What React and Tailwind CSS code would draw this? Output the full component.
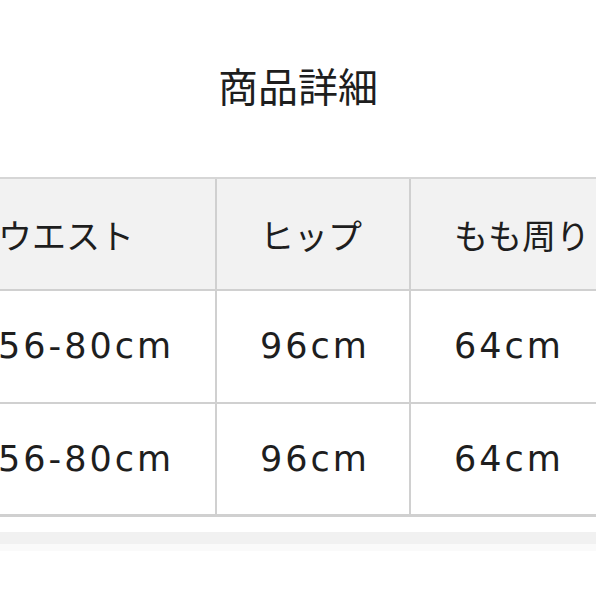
import React from 'react';

const headers = ['ウエスト', 'ヒップ', 'もも周り'];
const rows = [
  ['56-80cm', '96cm', '64cm'],
  ['56-80cm', '96cm', '64cm'],
];
const widths = ['w-[262px]', 'w-[194px]', 'w-[200px]'];

export default function App() {
  return (
    <div
      className="w-[596px] h-[596px] overflow-hidden bg-white text-[#1e1e1e]"
      style={{ fontFamily: '"Noto Sans CJK JP", "Noto Sans", sans-serif' }}
    >
      <h1 className="mt-[65px] text-center text-[40px] leading-none font-normal">商品詳細</h1>

      <div className="mt-[72px] ml-[-45px] w-[656px] border-t-2 border-[#d6d6d6]">
        <div className="flex h-[112px] border-b-2 border-[#d0d0d0] bg-[#f2f2f2]">
          {headers.map((h, i) => (
            <div
              key={h}
              className={`${widths[i]} shrink-0 flex items-center pl-[43px] text-[34px] border-r-2 border-[#d0d0d0]`}
            >
              {h}
            </div>
          ))}
        </div>
        {rows.map((row, r) => (
          <div
            key={r}
            className={`flex h-[113px] bg-white border-[#d0d0d0] ${r === rows.length - 1 ? 'border-b-[3px]' : 'border-b-2'}`}
          >
            {row.map((v, i) => (
              <div
                key={i}
                className={`${widths[i]} shrink-0 flex items-center pl-[43px] text-[35px] tracking-[3px] border-r-2 border-[#d0d0d0]`}
                style={{ fontFamily: '"DejaVu Sans", sans-serif' }}
              >
                {v}
              </div>
            ))}
          </div>
        ))}
      </div>

      <div className="mt-[15px] h-[12px] bg-[#f1f1f1]" />
      <div className="h-[7px] bg-[#fafafa]" />
    </div>
  );
}
